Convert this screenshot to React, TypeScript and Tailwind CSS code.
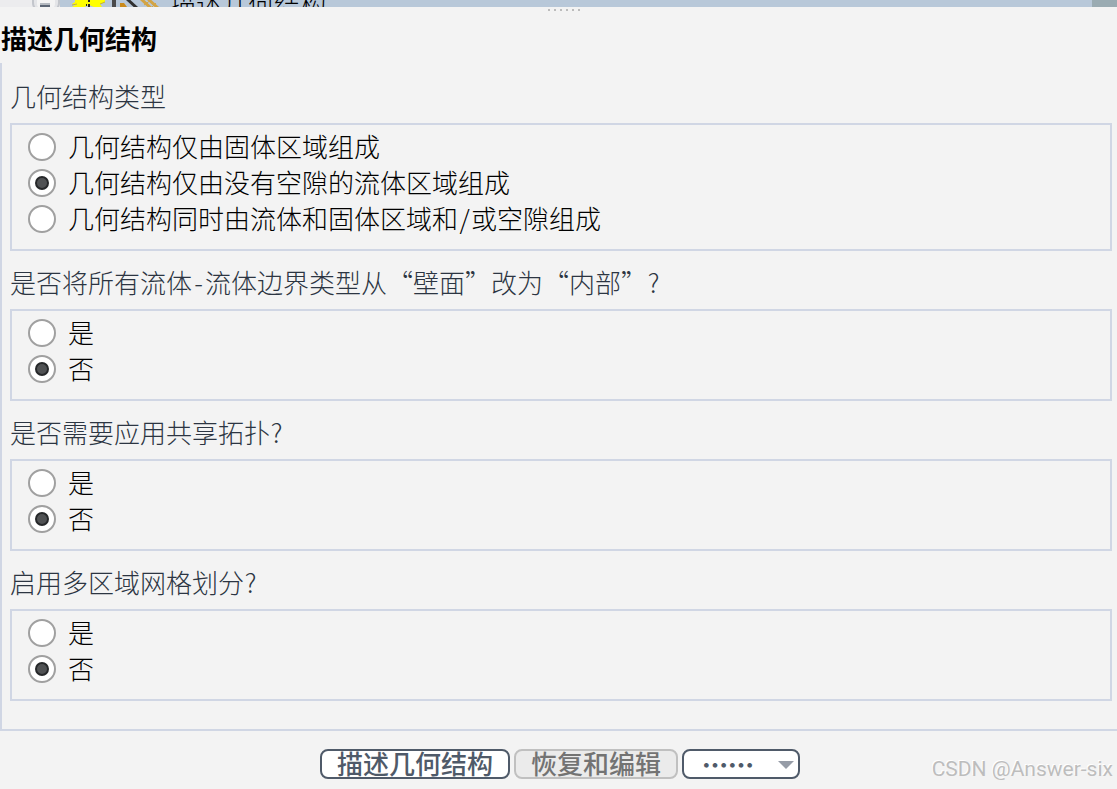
import { useState } from "react";

interface Option {
  value: string;
  label: React.ReactNode;
}

interface QuestionProps {
  name: string;
  title: React.ReactNode;
  options: Option[];
  initial: string;
}

const yesNo: Option[] = [
  { value: "yes", label: "是" },
  { value: "no", label: "否" },
];

// latin punctuation takes half the width of a chinese character
function Half({ children }: { children: string }) {
  return <span className="inline-block w-[13px] text-center">{children}</span>;
}

function Question({ name, title, options, initial }: QuestionProps) {
  const [selected, setSelected] = useState(initial);

  return (
    <fieldset className="pt-3">
      <legend className="float-left mb-2 h-[38px] w-full leading-[38px] text-[#2c3542]">{title}</legend>
      <div className="clear-both border-2 border-[#d0d6e4] pt-1 pb-3 pl-4">
        {options.map((option) => (
          <label key={option.value} className="flex h-9 items-center gap-3 text-black">
            <input
              type="radio"
              name={name}
              value={option.value}
              checked={selected === option.value}
              onChange={() => setSelected(option.value)}
              className="relative size-7 shrink-0 appearance-none rounded-full border-2 border-[#a0a0a0] bg-white checked:before:absolute checked:before:inset-[5px] checked:before:rounded-full checked:before:border-2 checked:before:border-[#26282a] checked:before:bg-[#505254] checked:before:content-['']"
            />
            <span className="pb-[2px] leading-8">{option.label}</span>
          </label>
        ))}
      </div>
    </fieldset>
  );
}

function TreeRow() {
  return (
    <div className="flex h-[7px] overflow-hidden bg-[#b8c8d9]">
      <div className="flex w-[60px] shrink-0 justify-end bg-[#ececee]">
        <svg width="28" height="7" viewBox="0 0 28 7">
          <rect x="1" y="-19" width="26" height="30" rx="8" fill="#e4e5e8" stroke="#c3c6cc" strokeWidth="2" />
          <rect x="5" y="-13" width="18" height="22" rx="5" fill="#f4f4f4" />
          <rect x="8" y="5" width="10" height="2" fill="#5c6675" />
          <rect x="8" y="3" width="10" height="2" fill="#b4b9c0" />
        </svg>
      </div>
      <svg width="110" height="7" viewBox="0 0 110 7" className="shrink-0">
        <path d="M15 0H45V2L40 4L42 7H34L29 5L24 7H12L17 4H12L15 2Z" fill="#ffff00" />
        <path d="M12 5L17 4M45 2L40 4" fill="none" stroke="#c9b52e" />
        <path d="M29 0V2M29 4V7M26 5H27" stroke="#222" strokeWidth="2" />
        <rect x="52" y="0" width="4" height="7" fill="#4a4a4a" />
        <path d="M60 3H64L67 7H60Z" fill="#c98a1c" />
        <path d="M67 -1L77 8" stroke="#303030" strokeWidth="3" />
        <path d="M81 -1L91 8M88 -1L98 8" stroke="#d3a444" strokeWidth="3" />
        <path d="M84 5L91 0M91 8L96 3" stroke="#d3a444" strokeWidth="1" />
      </svg>
      <span className="-mt-[10px] h-7 grow whitespace-nowrap leading-7 text-black">描述几何结构</span>
      <div className="w-[25px] shrink-0 bg-[#9aabb2]" />
    </div>
  );
}

function Grip() {
  return (
    <div className="flex h-0 justify-center gap-1 pl-[11px]">
      {[0, 1, 2, 3, 4, 5].map((dot) => (
        <i key={dot} className="mt-[2px] size-[2px] shrink-0 bg-[#bcbcbc]" />
      ))}
    </div>
  );
}

function App() {
  return (
    <div
      lang="zh-CN"
      className="relative min-h-screen bg-[#f3f3f3] font-['Noto_Sans_CJK_SC',sans-serif] text-[26px] font-light"
    >
      <TreeRow />
      <Grip />
      <h1 className="h-14 pt-[11px] pl-px leading-10 font-bold text-black">描述几何结构</h1>

      <main className="border-b-2 border-l-2 border-[#d0d6e4] pt-[2px] pr-[5px] pb-7 pl-2">
        <Question
          name="geometry"
          title="几何结构类型"
          initial="fluid"
          options={[
            { value: "solid", label: "几何结构仅由固体区域组成" },
            { value: "fluid", label: "几何结构仅由没有空隙的流体区域组成" },
            { value: "both", label: <>几何结构同时由流体和固体区域和<Half>/</Half>或空隙组成</> },
          ]}
        />
        <Question
          name="boundary"
          title={<>是否将所有流体<Half>-</Half>流体边界类型从“壁面”改为“内部”<Half>?</Half></>}
          initial="no"
          options={yesNo}
        />
        <Question name="topology" title={<>是否需要应用共享拓扑<Half>?</Half></>} initial="no" options={yesNo} />
        <Question name="multizone" title={<>启用多区域网格划分<Half>?</Half></>} initial="no" options={yesNo} />
      </main>

      <footer className="flex justify-center gap-1 pt-[18px] pb-[10px] pl-[3px] font-medium">
        <button className="flex h-[30px] items-center rounded-lg border-2 border-[#4f5a69] bg-white px-[15px] pb-1 text-[#4f5a69]">
          描述几何结构
        </button>
        <button
          disabled
          className="flex h-[30px] items-center rounded-lg border-2 border-[#c0c0c0] bg-[#ebebeb] px-[15px] pb-1 text-[#737373]"
        >
          恢复和编辑
        </button>
        <div className="relative">
          <select
            aria-label="更多"
            className="block h-[30px] w-[118px] appearance-none rounded-lg border-2 border-[#4f5a69] bg-white pl-[18px] font-black leading-[26px] text-[#4f5a69]"
          >
            <option>……</option>
          </select>
          <svg
            width="16"
            height="8"
            viewBox="0 0 16 8"
            className="pointer-events-none absolute top-3 right-[6px] fill-[#969ca7]"
          >
            <path d="M0 0H16L8 8Z" />
          </svg>
        </div>
      </footer>

      <p className="absolute right-1 bottom-1 font-[Roboto,sans-serif] text-[21px] leading-8 font-normal text-[#bdbdbd] [text-shadow:-1px_-1px_0_#fff]">
        CSDN @Answer-six
      </p>
    </div>
  );
}

export default App;
